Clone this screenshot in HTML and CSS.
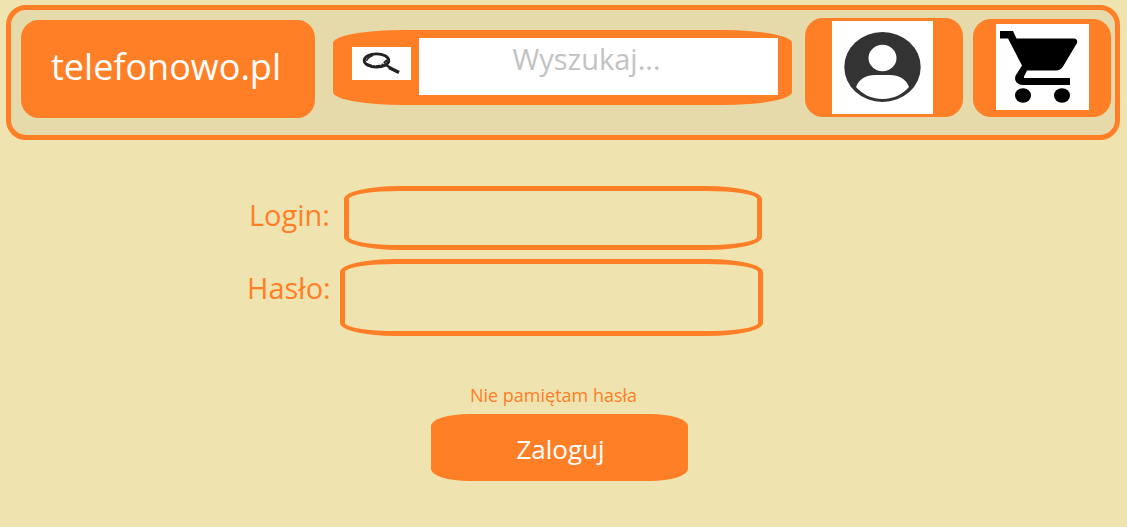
FILE: index.html
```html
<!DOCTYPE html>
<html lang="pl">
<head>
<meta charset="utf-8">
<meta name="viewport" content="width=device-width, initial-scale=1">
<title>telefonowo.pl</title>
<link rel="stylesheet" href="styles.css">
</head>
<body>
<header class="topbar">
  <a class="logo" href="#">telefonowo.pl</a>
  <form class="search" role="search">
    <button class="search-button" type="submit" aria-label="Szukaj">
      <svg width="59" height="33" viewBox="0 0 59 33" aria-hidden="true">
        <path d="M34 18L38 20.500" stroke="#222" stroke-width="2.600"/>
        <path d="M37 20.500L47 25.500" stroke="#222" stroke-width="3.600"/>
        <ellipse cx="24.500" cy="13.500" rx="12.300" ry="6.700" fill="#fff" stroke="#222" stroke-width="2.800"/>
        <path d="M15 17Q23 21 30 18L35 13" fill="none" stroke="#222" stroke-width="2" stroke-dasharray="5 1 2 1"/>
        <path d="M14.500 14Q16 10 21 8.500" fill="none" stroke="#222" stroke-width="1.500"/>
      </svg>
    </button>
    <input class="search-input" type="search" placeholder="Wyszukaj..." aria-label="Wyszukaj">
  </form>
  <a class="tile account" href="#" aria-label="Konto">
    <svg width="101" height="93" viewBox="0 0 101 93" aria-hidden="true">
      <rect width="101" height="93" fill="#fff"/>
      <ellipse cx="50.500" cy="46" rx="38.200" ry="35" fill="#333"/>
      <ellipse cx="50.500" cy="37" rx="14" ry="13.200" fill="#fff"/>
      <path d="M24 66C27 58 34 54 43 54H58C67 54 74 58 77 66C71 73 62 78 50.500 78C39 78 30 73 24 66Z" fill="#fff"/>
    </svg>
  </a>
  <a class="tile cart" href="#" aria-label="Koszyk">
    <svg width="93" height="86" viewBox="0 0 93 86" aria-hidden="true">
      <rect width="93" height="86" fill="#fff"/>
      <path d="M4 7H17L20.500 14.500H78Q82 15 81 19L67 42.500Q64.500 46.500 60 46.500H31L28 52.500Q27.500 54 29 54H74V61H27C20 61 17.500 55 20 51L26 41.500L12 14.500H4Z"/>
      <ellipse cx="27" cy="71.500" rx="8" ry="7.300"/>
      <ellipse cx="66" cy="71.500" rx="8" ry="7.300"/>
    </svg>
  </a>
</header>
<main>
  <form class="login">
    <div class="fields">
      <div class="row">
        <label for="login">Login:</label>
        <input class="field field-login" id="login" type="text" autocomplete="username">
      </div>
      <div class="row">
        <label for="password">Hasło:</label>
        <input class="field field-password" id="password" type="password" autocomplete="current-password">
      </div>
    </div>
    <div class="actions">
      <a class="forgot" href="#">Nie pamiętam hasła</a>
      <button class="submit" type="submit">Zaloguj</button>
    </div>
  </form>
</main>
</body>
</html>
```
FILE: styles.css
```css
* {
  box-sizing: border-box;
}

body {
  margin: 0;
  background: #efe3af;
  color: #ff7f27;
  font-family: "Open Sans", "Noto Sans", sans-serif;
}

input,
button {
  font-family: inherit;
}

.topbar {
  display: flex;
  align-items: flex-start;
  margin: 5px 7px 0 6px;
  padding: 8px 4px 17px 10px;
  border: 5px solid #ff7f27;
  border-radius: 20px;
  background: #e7daaa;
}

.logo {
  flex: 0 0 294px;
  margin: 2px 18px 0 0;
  padding: 22px 4px 26px 0;
  border-radius: 18px;
  background: #ff7f27;
  color: #fff;
  font-size: 36px;
  line-height: 50px;
  text-align: center;
  text-decoration: none;
}

.search {
  display: flex;
  flex: 1;
  gap: 8px;
  min-width: 0;
  margin: 12px 13px 0 0;
  padding: 8px 14px 10px 19px;
  border-radius: 70px / 13px;
  background: #ff7f27;
}

.search-button {
  flex: none;
  align-self: center;
  margin-top: -6px;
  padding: 0;
  border: 0;
  background: #fff;
}

svg {
  display: block;
}

.search-input {
  flex: 1;
  min-width: 0;
  height: 57px;
  padding: 0 0 16px;
  border: 0;
  border-radius: 0;
  background: #fff;
  color: #333;
  font-size: 29px;
  text-align: center;
  appearance: none;
}

.search-input::placeholder {
  color: #c3c3c3;
  opacity: 1;
}

.tile {
  display: flex;
  flex: none;
  border-radius: 18px;
  background: #ff7f27;
}

.account {
  margin-right: 10px;
  padding: 3px 30px 3px 27px;
}

.cart {
  margin-top: 1px;
  padding: 5px 22px 7px 23px;
}

.fields {
  display: flex;
  flex-direction: column;
  align-items: center;
  gap: 9px;
  padding: 46px 117px 0 0;
}

.row {
  display: flex;
  width: 516px;
  max-width: 100%;
}

label {
  flex: 0 0 83px;
  padding-top: 9px;
  font-size: 29px;
  line-height: 40px;
  text-align: right;
  white-space: nowrap;
}

.field {
  flex: 1;
  min-width: 0;
  padding: 0 24px;
  border: 5px solid #ff7f27;
  border-radius: 56px / 13px;
  background: transparent;
  color: #ff7f27;
  font-size: 29px;
}

.field-login {
  height: 64px;
  margin: 0 1px 0 14px;
}

.field-password {
  height: 77px;
  margin-left: 9px;
}

.actions {
  display: flex;
  flex-direction: column;
  align-items: center;
  gap: 7px;
  padding: 47px 8px 46px 0;
}

.forgot {
  padding-right: 12px;
  color: #ff7f27;
  font-size: 18px;
  line-height: 24px;
  text-decoration: none;
}

.submit {
  width: 257px;
  height: 67px;
  padding: 2px 0 0 2px;
  border: 0;
  border-radius: 38px / 12px;
  background: #ff7f27;
  color: #fff;
  font-size: 26px;
}
```
